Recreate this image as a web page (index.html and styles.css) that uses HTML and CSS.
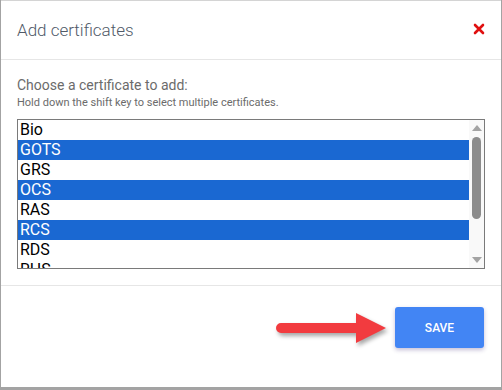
FILE: index.html
```html
<!DOCTYPE html>
<html>
<head>
  <meta charset="UTF-8" />
  <title>Add certificates</title>
  <link rel="stylesheet" href="styles.css">
</head>
<body>
  <div class="dialog">
    <div class="dialog-header">
      <h2 class="dialog-title">Add certificates</h2>
      <button class="close-btn" title="Close">
        <svg width="12" height="12" viewBox="0 0 12 12">
          <path d="M2 2 L10 10 M10 2 L2 10" stroke="#e01010" stroke-width="2.6" stroke-linecap="round" />
        </svg>
      </button>
    </div>
    <div class="dialog-body">
      <p class="prompt">Choose a certificate to add:</p>
      <p class="hint">Hold down the shift key to select multiple certificates.</p>
      <div class="cert-select">
        <div class="cert-list">
          <div class="cert-option">Bio</div>
          <div class="cert-option selected">GOTS</div>
          <div class="cert-option">GRS</div>
          <div class="cert-option selected">OCS</div>
          <div class="cert-option">RAS</div>
          <div class="cert-option selected">RCS</div>
          <div class="cert-option">RDS</div>
          <div class="cert-option">RHS</div>
        </div>
        <div class="scrollbar">
          <div class="scroll-arrow up"></div>
          <div class="scroll-track"><div class="scroll-thumb"></div></div>
          <div class="scroll-arrow down"></div>
        </div>
      </div>
    </div>
    <div class="dialog-footer">
      <svg class="pointer-arrow" width="112" height="34" viewBox="0 0 112 34">
        <path d="M5 12 H80 V2 L110 17 L80 32 V22 H5 A5 5 0 0 1 5 12 Z" fill="#f23b3f" />
      </svg>
      <button class="save-btn">SAVE</button>
    </div>
  </div>
</body>
</html>
```

FILE: styles.css
```css
html {
  background: #a3a3a3;
}
body {
  margin: 0;
  font-family: Roboto, "Liberation Sans", sans-serif;
}
.dialog {
  width: 500px;
  height: 387px;
  margin-left: 1px;
  box-sizing: border-box;
  border-top: 1px solid #d4d4d4;
  background: #fff;
  display: flex;
  flex-direction: column;
}
.dialog-header {
  height: 58px;
  flex-shrink: 0;
  display: flex;
  align-items: center;
  justify-content: space-between;
  padding: 0 16px;
  border-bottom: 1px solid #e6e6e6;
}
.dialog-title {
  margin: 0;
  font-size: 17px;
  font-weight: 300;
  color: #505a68;
}
.close-btn {
  border: none;
  background: none;
  padding: 0;
  width: 12px;
  height: 12px;
  margin-top: -2px;
  cursor: pointer;
  display: flex;
}
.dialog-body {
  padding: 17px 16px 16px;
  border-bottom: 1px solid #e6e6e6;
}
.prompt {
  margin: 0;
  font-size: 14px;
  line-height: 17px;
  color: #6b6b6b;
}
.hint {
  margin: 2px 0 10px;
  font-size: 11px;
  line-height: 13px;
  color: #6b6b6b;
}
.cert-select {
  height: 150px;
  box-sizing: border-box;
  border: 1px solid #7a7a7a;
  display: flex;
  overflow: hidden;
}
.cert-list {
  flex: 1;
  overflow: hidden;
}
.cert-option {
  height: 20px;
  line-height: 20px;
  padding-left: 2px;
  font-size: 16px;
  color: #000;
}
.cert-option.selected {
  background: #1a68d2;
  color: #fff;
}
.scrollbar {
  width: 15px;
  background: #f9f9f9;
  display: flex;
  flex-direction: column;
  align-items: center;
}
.scroll-arrow {
  width: 0;
  height: 0;
  border-left: 5px solid transparent;
  border-right: 5px solid transparent;
  margin: 5px 0;
}
.scroll-arrow.up {
  border-bottom: 6px solid #a3a3a3;
}
.scroll-arrow.down {
  border-top: 6px solid #a3a3a3;
}
.scroll-track {
  flex: 1;
  width: 100%;
  display: flex;
  justify-content: center;
}
.scroll-thumb {
  width: 9px;
  height: 82px;
  margin-top: 1px;
  border-radius: 5px;
  background: #8c8c8c;
}
.dialog-footer {
  flex: 1;
  display: flex;
  justify-content: flex-end;
  align-items: flex-start;
  gap: 7px;
  padding: 21px 17px 0 0;
}
.pointer-arrow {
  margin-top: 4px;
  filter: drop-shadow(2px 3px 2px rgba(0, 0, 0, 0.35));
}
.save-btn {
  width: 89px;
  height: 41px;
  border: none;
  border-radius: 3px;
  background: #4285f4;
  color: #fff;
  font-family: Roboto, "Liberation Sans", sans-serif;
  font-size: 12px;
  font-weight: 500;
  box-shadow: 0 2px 4px rgba(60, 40, 120, 0.3);
  cursor: pointer;
}
```
